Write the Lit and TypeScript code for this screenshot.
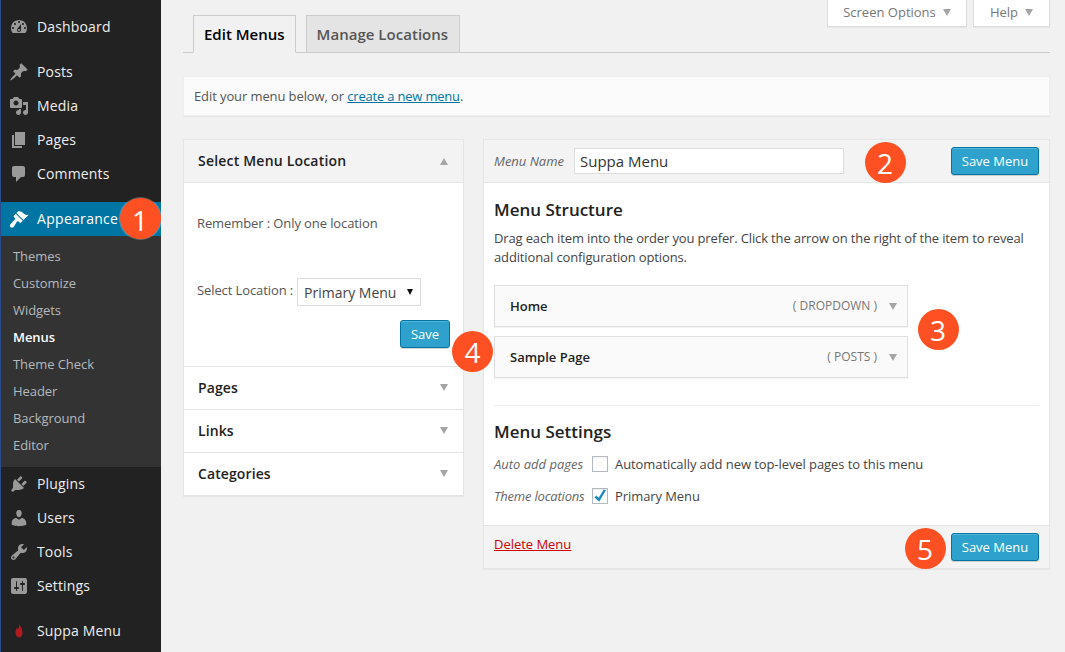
import { LitElement, html, css, svg } from "lit";
import { customElement } from "lit/decorators.js";

const P: Record<string, string> = {
  dashboard: "M3.76 16h12.48c1.1-1.37 1.76-3.11 1.76-5 0-4.42-3.58-8-8-8s-8 3.58-8 8c0 1.89.66 3.63 1.76 5zM10 4c.55 0 1 .45 1 1s-.45 1-1 1-1-.45-1-1 .45-1 1-1zM6 6c.55 0 1 .45 1 1s-.45 1-1 1-1-.45-1-1 .45-1 1-1zm8 0c.55 0 1 .45 1 1s-.45 1-1 1-1-.45-1-1 .45-1 1-1zm-5.37 5.55L12 7v6c0 1.1-.9 2-2 2s-2-.9-2-2c0-.57.24-1.08.63-1.45zM4 10c.55 0 1 .45 1 1s-.45 1-1 1-1-.45-1-1 .45-1 1-1zm12 0c.55 0 1 .45 1 1s-.45 1-1 1-1-.45-1-1 .45-1 1-1zm-5 3c0-.55-.45-1-1-1s-1 .45-1 1 .45 1 1 1 1-.45 1-1z",
  posts: "M10.44 3.02l1.82-1.82 6.36 6.35-1.83 1.82c-1.05-.68-2.48-.57-3.41.36l-.75.75c-.92.93-1.04 2.35-.35 3.41l-1.83 1.82-2.41-2.41-2.8 2.79c-.42.42-3.38 2.71-3.8 2.29s1.86-3.39 2.28-3.81l2.79-2.79L4.1 9.36l1.83-1.82c1.05.69 2.48.57 3.4-.36l.75-.75c.93-.92 1.05-2.35.36-3.41z",
  media: "M13 11V4c0-.55-.45-1-1-1h-1.67L9 1H5L3.67 3H2c-.55 0-1 .45-1 1v7c0 .55.45 1 1 1h10c.55 0 1-.45 1-1zM7 4.5c1.38 0 2.5 1.12 2.5 2.5S8.38 9.5 7 9.5 4.5 8.38 4.5 7 5.62 4.5 7 4.5zM14 6h5v10.5c0 1.38-1.12 2.5-2.5 2.5S14 17.88 14 16.5s1.12-2.5 2.5-2.5c.17 0 .34.02.5.05V9h-3V6zm-4 8.05V13h2v3.5c0 1.38-1.12 2.5-2.5 2.5S7 17.88 7 16.5 8.12 14 9.5 14c.17 0 .34.02.5.05z",
  pages: "M6 15V2h10v13H6zm-1 1h8v2H3V5h2v11z",
  comments: "M5 2h9c1.1 0 2 .9 2 2v7c0 1.1-.9 2-2 2h-2l-5 5v-5H5c-1.1 0-2-.9-2-2V4c0-1.1.9-2 2-2z",
  appearance: "M14.48 11.06L7.41 3.99l1.5-1.5c.5-.56 2.3-.47 3.51.32 1.21.8 1.43 1.28 2.91 2.1 1.18.64 2.45 1.26 4.45.85zm-.71.71L6.7 4.7 4.93 6.47c-.39.39-.39 1.02 0 1.41l1.06 1.06c.39.39.39 1.03 0 1.42L1.6 15c-.9.9-.9 2.3-.1 3.1s2.2.8 3.1-.1l3.51-5.52c.39-.39 1.03-.39 1.42 0l1.06 1.06c.39.39 1.02.39 1.41 0z",
  plugins: "M13.11 4.36L9.87 7.6 8 5.73l3.24-3.24c.35-.34 1.05-.2 1.56.32.52.51.66 1.21.31 1.55zm-8 1.77l.91-1.12 9.01 9.01-1.19.84c-.71.71-2.63 1.16-3.82 1.16H6.14L4.9 17.26c-.59.59-1.54.59-2.12 0-.59-.58-.59-1.53 0-2.12l1.24-1.24v-3.88c0-1.13.4-3.19 1.09-3.89zm7.26 3.97l3.24-3.24c.34-.35 1.04-.21 1.55.31.52.51.66 1.21.31 1.55l-3.24 3.25z",
  users: "M10 9.25c-2.27 0-2.73-3.44-2.73-3.44C7 4.02 7.82 2 9.97 2c2.16 0 2.98 2.02 2.71 3.81 0 0-.41 3.44-2.68 3.44zm0 2.57L12.72 10c2.39 0 4.52 2.33 4.52 4.53v2.49s-3.65 1.13-7.24 1.13c-3.65 0-7.24-1.13-7.24-1.13v-2.49c0-2.25 1.94-4.48 4.47-4.48z",
  tools: "M16.68 9.77c-1.34 1.34-3.3 1.67-4.95.99l-5.41 6.52c-.99.99-2.59.99-3.58 0s-.99-2.59 0-3.57l6.52-5.42c-.68-1.65-.35-3.61.99-4.95 1.28-1.28 3.12-1.62 4.72-1.06l-2.89 2.89 2.82 2.82 2.86-2.87c.53 1.58.18 3.39-1.08 4.65zM3.81 16.21c.4.39 1.04.39 1.43 0 .4-.4.4-1.04 0-1.43-.39-.4-1.03-.4-1.43 0-.39.39-.39 1.03 0 1.43z",
  settings: "M18 16V4c0-1.1-.9-2-2-2H4c-1.1 0-2 .9-2 2v12c0 1.1.9 2 2 2h12c1.1 0 2-.9 2-2zM8 11h1c.55 0 1 .45 1 1s-.45 1-1 1H8v1.5c0 .28-.22.5-.5.5s-.5-.22-.5-.5V13H6c-.55 0-1-.45-1-1s.45-1 1-1h1V5.500c0-.28.22-.5.5-.5s.5.22.5.5V11zm5-2h-1c-.55 0-1-.45-1-1s.45-1 1-1h1V5.500c0-.28.22-.5.5-.5s.5.22.5.5V7h1c.55 0 1 .45 1 1s-.45 1-1 1h-1v5.500c0 .28-.22.5-.5.5s-.5-.22-.5-.5V9z",
  flame: "M10.500 2.500c.3 2.500 3 4.800 3 8.500 0 3.200-1.500 5.500-3.500 5.500s-3.500-2.300-3.500-5c0-2.300 1-3.500 1.500-5 .4.700.7 1.500.8 2.300.9-1.800 1.900-4 1.700-6.300z",
};

const icon = (n: string) =>
  html`<svg class="ic ${n}" viewBox="0 0 20 20" aria-hidden="true">${svg`<path d=${P[n]}></path>`}</svg>`;

const caret = (up = false) => html`<span class="caret ${up ? "up" : ""}"></span>`;

@customElement("app-root")
export class AppRoot extends LitElement {
  static styles = css`
    :host { display: block; position: relative; width: 1065px; height: 652px; overflow: hidden; background: #f1f1f1; font-family: "Open Sans", sans-serif; font-size: 13px; color: #444; }
    * { box-sizing: border-box; }
    .layout { display: grid; grid-template-columns: 161px 1fr; height: 652px; }

    .side { background: #222; border-left: 1px solid #2a4b8d; padding-top: 10px; color: #eee; font-size: 14px; letter-spacing: .15px; }
    .it { display: flex; align-items: center; height: 34px; padding: 0 0 2px 8px; }
    .it .ic { width: 20px; height: 20px; fill: #999; margin: 2px 8px 0 0; flex: none; }
    .it.gap { margin-top: 11px; }
    .it.cur { background: #0074a2; color: #fff; letter-spacing: .3px; }
    .it.cur .ic { fill: #fff; }
    .it .flame { fill: #b01c1e; }
    .sub { background: #333; padding: 7px 0 8px; font-size: 13px; color: #b4b9be; letter-spacing: -.07px; }
    .sub div { height: 27px; line-height: 26px; padding-left: 12px; }
    .sub .on { color: #fff; font-weight: 600; }

    .main { padding: 0 15px 0 22px; min-width: 0; }
    .nav { display: flex; justify-content: space-between; height: 53px; border-bottom: 1px solid #ccc; padding-left: 10px; }
    .tabs { display: flex; align-items: flex-end; gap: 10px; }
    .tab { padding: 0 10px; border: 1px solid #ccc; background: #e4e4e4; color: #555; font-size: 15px; font-weight: 600; display: flex; align-items: center; }
    .tab.act { background: #f1f1f1; color: #000; border-bottom-color: #f1f1f1; height: 38px; margin-bottom: -1px; }
    .tab.off { height: 37px; border-bottom: none; letter-spacing: .03px; padding-right: 11px; }
    .meta { display: flex; gap: 6px; align-items: flex-start; }
    .mbtn { height: 27px; padding-bottom: 2px; background: #fff; border: 1px solid #ddd; border-top: none; color: #777; display: flex; align-items: center; justify-content: center; gap: 7px; font-size: 13px; box-shadow: 0 1px 1px rgba(0,0,0,.04); }
    .mbtn.so { width: 140px; }
    .mbtn.hp { width: 77px; }

    .notice { margin-top: 23px; height: 40px; background: #fbfbfb; border: 1px solid #eee; box-shadow: 0 1px 1px rgba(0,0,0,.04); padding-left: 10px; line-height: 39px; color: #555; font-size: 13px; letter-spacing: -.1px; }
    .link { color: #0074a2; text-decoration: underline; letter-spacing: -.2px; }

    .cols { display: grid; grid-template-columns: 281px 567px; gap: 19px; margin-top: 23px; align-items: start; }
    .panel { background: #fff; border: 1px solid #e5e5e5; box-shadow: 0 1px 1px rgba(0,0,0,.04); }
    .acc { display: flex; justify-content: space-between; align-items: center; height: 43px; padding: 0 15px 2px 14px; border-top: 1px solid #e5e5e5; font-size: 14px; font-weight: 600; color: #222; letter-spacing: .1px; }
    .acc.head { border-top: none; background: #f3f3f3; border-bottom: 1px solid #e5e5e5; height: 43px; letter-spacing: .2px; }
    .acc.head .caret { margin-top: 2px; }
    .caret { width: 0; height: 0; border-left: 4.5px solid transparent; border-right: 4.5px solid transparent; border-top: 7px solid #a5a5a5; display: inline-block; flex: none; }
    .caret.up { border-top: none; border-bottom: 7px solid #a5a5a5; }

    .locbody { height: 183px; padding: 31px 13px 0 13px; color: #555; font-size: 13px; letter-spacing: -.1px; }
    .locline { line-height: 18px; }
    .locrow { display: flex; align-items: flex-start; margin-top: 49px; }
    .locrow .lb { width: 100px; line-height: 18px; flex: none; }
    .selwrap { position: relative; margin-top: -3px; width: 124px; height: 28px; }
    select { appearance: none; -webkit-appearance: none; display: block; width: 124px; height: 28px; border: 1px solid #ddd; background: #fff; font: 14px "Open Sans", sans-serif; color: #444; padding: 0 0 0 6px; border-radius: 0; outline: none; }
    .selcaret { position: absolute; left: 110px; top: 11px; width: 0; height: 0; border-left: 3px solid transparent; border-right: 3px solid transparent; border-top: 6px solid #111; pointer-events: none; }
    .saverow { display: flex; justify-content: flex-end; margin-top: 14px; }

    .btn { display: inline-flex; align-items: center; justify-content: center; height: 28px; background: #2ea2cc; border: 1px solid #0074a2; border-radius: 3px; color: #fff; font-size: 13px; letter-spacing: 0; box-shadow: inset 0 1px 0 rgba(120,200,230,.5), 0 1px 0 rgba(0,0,0,.15); }
    .btn.m { width: 88px; }
    .btn.s { width: 50px; }

    .mhead { display: flex; align-items: center; height: 43px; background: #f3f3f3; border-bottom: 1px solid #e5e5e5; padding: 0 10px; }
    .mhead em, .lab { font-style: italic; color: #666; font-size: 13px; }
    .mhead em { width: 80px; }
    .mhead input { width: 270px; height: 26px; border: 1px solid #ddd; background: #fff; font: 15px "Open Sans", sans-serif; color: #333; padding: 0 5px; outline: none; }
    .mhead .btn { margin-left: auto; }

    .mbody { height: 342px; padding: 15px 10px 0; }
    h3 { margin: 0; font-size: 17px; font-weight: 600; color: #222; line-height: 24px; }
    .desc { margin: 7px 0 0; font-size: 13px; line-height: 19px; color: #444; letter-spacing: -.14px; }
    .items { display: flex; flex-direction: column; gap: 9px; width: 414px; margin-top: 18px; }
    .mi { display: flex; align-items: center; height: 42px; border: 1px solid #dfdfdf; background: #fafafa; padding: 0 10px 0 15px; box-shadow: 0 1px 1px rgba(0,0,0,.04); }
    .mi b { font-size: 13px; font-weight: 600; color: #222; }
    .mi .ty { margin: 0 12px 2px auto; font-size: 12px; color: #777; }
    hr { border: none; border-top: 1px solid #eee; margin: 27px 0 0; }
    .msettings { margin-top: 14px; }
    .srow { display: flex; align-items: center; height: 18px; margin-top: 14px; }
    .srow.first { margin-top: 11px; }
    .lab { width: 98px; flex: none; }
    .lab.tight { letter-spacing: -.2px; }
    .cb { width: 16px; height: 16px; border: 1px solid #b4b9be; background: #fff; margin-right: 7px; flex: none; box-shadow: inset 0 1px 2px rgba(0,0,0,.07); display: flex; }
    .cb svg { width: 14px; height: 14px; fill: #1e8cbe; }
    .srow .t { color: #444; font-size: 13px; letter-spacing: -.08px; }

    .mfoot { display: flex; align-items: center; justify-content: space-between; height: 43px; background: #f3f3f3; border-top: 1px solid #e5e5e5; padding: 0 10px; }
    .del { color: #c00; text-decoration: underline; font-size: 13px; margin-bottom: 6px; letter-spacing: -.03px; }

    .bdg { position: absolute; width: 41px; height: 41px; padding-top: 2px; border-radius: 50%; background: #ff5023; color: #fff; font-size: 28px; display: flex; align-items: center; justify-content: center; line-height: 1; }
    .b1 { left: 119.500px; top: 198px; box-shadow: 0 0 0 1px rgba(255,255,255,.25); }
    .b2 { left: 864.500px; top: 141.500px; }
    .b3 { left: 917.500px; top: 308.500px; }
    .b4 { left: 452px; top: 330.500px; }
    .b5 { left: 904.500px; top: 527.500px; }
  `;

  render() {
    return html`
      <div class="layout">
        <aside class="side">
          <div class="it">${icon("dashboard")}Dashboard</div>
          <div class="it gap">${icon("posts")}Posts</div>
          <div class="it">${icon("media")}Media</div>
          <div class="it">${icon("pages")}Pages</div>
          <div class="it">${icon("comments")}Comments</div>
          <div class="it gap cur">${icon("appearance")}Appearance</div>
          <div class="sub">
            <div>Themes</div><div>Customize</div><div>Widgets</div><div class="on">Menus</div>
            <div>Theme Check</div><div>Header</div><div>Background</div><div>Editor</div>
          </div>
          <div class="it">${icon("plugins")}Plugins</div>
          <div class="it">${icon("users")}Users</div>
          <div class="it">${icon("tools")}Tools</div>
          <div class="it">${icon("settings")}Settings</div>
          <div class="it gap">${icon("flame")}Suppa Menu</div>
        </aside>
        <main class="main">
          <div class="nav">
            <div class="tabs">
              <div class="tab act">Edit Menus</div>
              <div class="tab off">Manage Locations</div>
            </div>
            <div class="meta">
              <div class="mbtn so">Screen Options ${caret()}</div>
              <div class="mbtn hp">Help ${caret()}</div>
            </div>
          </div>
          <div class="notice">Edit your menu below, or <span class="link">create a new menu</span>.</div>
          <div class="cols">
            <section class="panel">
              <div class="acc head">Select Menu Location ${caret(true)}</div>
              <div class="locbody">
                <div class="locline">Remember : Only one location</div>
                <div class="locrow">
                  <span class="lb">Select Location :</span>
                  <div class="selwrap">
                    <select><option>Primary Menu</option></select>
                    <span class="selcaret"></span>
                  </div>
                </div>
                <div class="saverow"><span class="btn s">Save</span></div>
              </div>
              <div class="acc">Pages ${caret()}</div>
              <div class="acc">Links ${caret()}</div>
              <div class="acc">Categories ${caret()}</div>
            </section>
            <section class="panel">
              <div class="mhead">
                <em>Menu Name</em>
                <input value="Suppa Menu" />
                <span class="btn m">Save Menu</span>
              </div>
              <div class="mbody">
                <h3>Menu Structure</h3>
                <p class="desc">Drag each item into the order you prefer. Click the arrow on the right of the item to reveal additional configuration options.</p>
                <div class="items">
                  <div class="mi"><b>Home</b><span class="ty">( DROPDOWN )</span>${caret()}</div>
                  <div class="mi"><b>Sample Page</b><span class="ty">( POSTS )</span>${caret()}</div>
                </div>
                <hr />
                <div class="msettings">
                  <h3>Menu Settings</h3>
                  <div class="srow first"><span class="lab">Auto add pages</span><span class="cb"></span><span class="t">Automatically add new top-level pages to this menu</span></div>
                  <div class="srow"><span class="lab tight">Theme locations</span><span class="cb"><svg viewBox="0 0 14 14"><path d="M13 1.200 6.200 12.800 1.500 8.600l1.700-2 2.500 2.100 5-8.200z"></path></svg></span><span class="t">Primary Menu</span></div>
                </div>
              </div>
              <div class="mfoot">
                <span class="del">Delete Menu</span>
                <span class="btn m">Save Menu</span>
              </div>
            </section>
          </div>
        </main>
      </div>
      <div class="bdg b1">1</div>
      <div class="bdg b2">2</div>
      <div class="bdg b3">3</div>
      <div class="bdg b4">4</div>
      <div class="bdg b5">5</div>
    `;
  }
}
